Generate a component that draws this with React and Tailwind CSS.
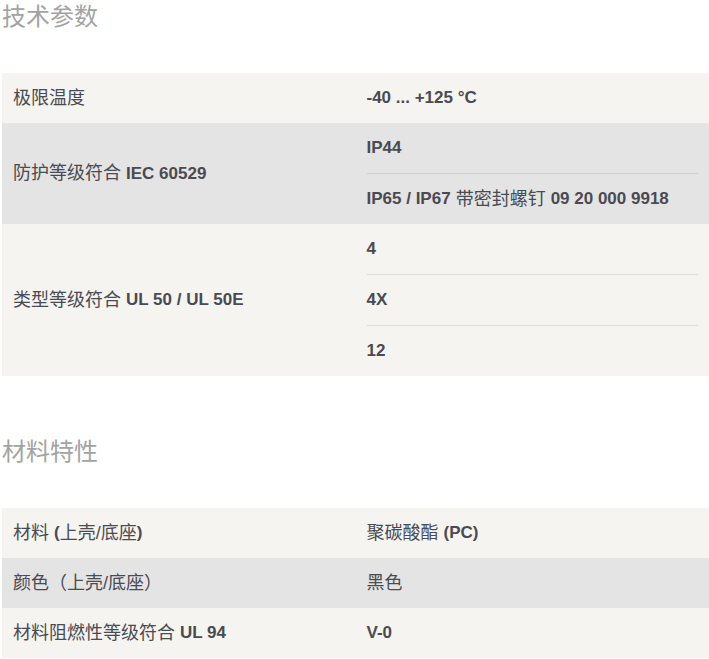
const font = { fontFamily: '"Liberation Sans", "Noto Sans CJK SC", sans-serif' };

// Latin parts are bolder than the CJK ones in the source
const L = ({ children }) => <span className="text-[17px] font-semibold">{children}</span>;

const Row = ({ label, values, bg, line }) => (
  <div className={`grid grid-cols-2 ${bg}`}>
    <div className="flex items-center px-[11px] text-[18px] text-[#4a4a52]">{label}</div>
    <div className="flex flex-col px-[11px]">
      {values.map((v, i) => (
        <div
          key={i}
          className={`box-content flex h-[50px] items-center text-[18px] text-[#4a4a52] ${i > 0 ? `border-t ${line}` : ""}`}
        >
          {v}
        </div>
      ))}
    </div>
  </div>
);

const Heading = ({ children, className }) => (
  <h2 className={`h-[34px] pl-[2px] text-[24px] leading-[34px] text-[#a3a3a3] ${className}`}>{children}</h2>
);

export default function App() {
  return (
    <div className="w-[709px] bg-white" style={font}>
      <Heading>技术参数</Heading>
      <div className="mt-[39px] ml-[2px]">
        <Row bg="bg-[#f5f4f1]" line="border-[#e0ded9]" label="极限温度" values={[<L>-40 ... +125 °C</L>]} />
        <Row
          bg="bg-[#e4e4e4]"
          line="border-[#d0d0d0]"
          label={<>防护等级符合&nbsp;<L>IEC 60529</L></>}
          values={[
            <L>IP44</L>,
            <>
              <L>IP65 / IP67</L>&nbsp;带密封螺钉&nbsp;<L>09 20 000 9918</L>
            </>,
          ]}
        />
        <Row
          bg="bg-[#f5f4f1]"
          line="border-[#e0ded9]"
          label={<>类型等级符合&nbsp;<L>UL 50 / UL 50E</L></>}
          values={[<L>4</L>, <L>4X</L>, <L>12</L>]}
        />
      </div>

      <Heading className="mt-[59px]">材料特性</Heading>
      <div className="mt-[39px] ml-[2px]">
        <Row bg="bg-[#f5f4f1]" line="border-[#e0ded9]" label={<>材料&nbsp;<L>(</L>上壳/底座<L>)</L></>} values={[<>聚碳酸酯&nbsp;<L>(PC)</L></>]} />
        <Row bg="bg-[#e4e4e4]" line="border-[#d0d0d0]" label="颜色（上壳/底座）" values={["黑色"]} />
        <Row bg="bg-[#f5f4f1]" line="border-[#e0ded9]" label={<>材料阻燃性等级符合&nbsp;<L>UL 94</L></>} values={[<L>V-0</L>]} />
      </div>
    </div>
  );
}
